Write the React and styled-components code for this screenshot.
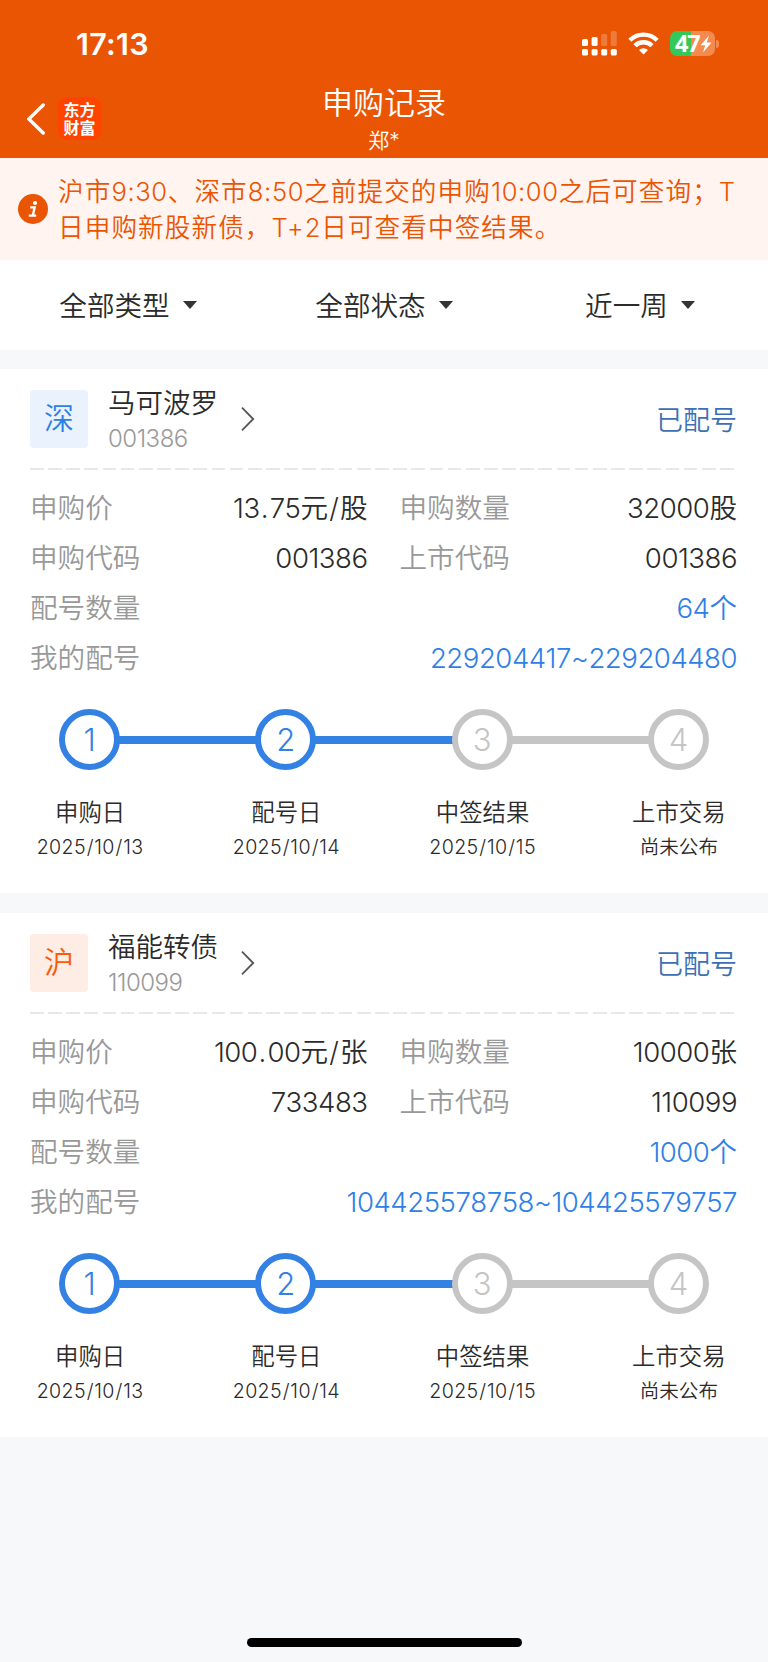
import { Fragment } from "react";
import styled, { createGlobalStyle } from "styled-components";

const GlobalStyle = createGlobalStyle`
    * {
        box-sizing: border-box;
    }

    body {
        margin: 0;
        background: #f6f8fa;
        font-family: Inter, "Noto Sans CJK SC", sans-serif;
        font-weight: 350;
        color: #2b2b2b;
    }
`;

const filters = ["全部类型", "全部状态", "近一周"];

const records = [
    {
        market: "深",
        name: "马可波罗",
        code: "001386",
        status: "已配号",
        price: "13.75元/股",
        amount: "32000股",
        applyCode: "001386",
        listCode: "001386",
        count: "64个",
        numbers: "229204417~229204480"
    },
    {
        market: "沪",
        name: "福能转债",
        code: "110099",
        status: "已配号",
        price: "100.00元/张",
        amount: "10000张",
        applyCode: "733483",
        listCode: "110099",
        count: "1000个",
        numbers: "104425578758~104425579757"
    }
];

const steps = [
    { title: "申购日", date: "2025/10/13", done: true },
    { title: "配号日", date: "2025/10/14", done: true },
    { title: "中签结果", date: "2025/10/15", done: false },
    { title: "上市交易", date: "尚未公布", done: false }
];

// digits and separators are spaced differently from the chinese text
function Mixed({ text, spacing = -0.5 }) {
    return text.split(/([0-9:~]+|[./])/).filter(Boolean).map((part, i) => {
        if (/[./]/.test(part)) return <Separator key={i}>{part}</Separator>;
        if (/[0-9:~]/.test(part)) return <Digits key={i} $spacing={spacing}>{part}</Digits>;
        return <Fragment key={i}>{part}</Fragment>;
    });
}

function StatusIcons() {
    return (
        <Icons>
            <svg width="36" height="25" viewBox="0 0 36 25" fill="#fff">
                <rect x="0" y="8" width="6" height="7" rx="1.6" />
                <rect x="9.6" y="6" width="6" height="9" rx="1.6" />
                <rect x="19.2" y="3" width="6" height="12" rx="1.6" opacity="0.22" />
                <rect x="28.8" y="0" width="6" height="15" rx="1.6" opacity="0.22" />
                <rect x="0" y="18" width="6" height="6.6" rx="1.6" />
                <rect x="9.6" y="18" width="6" height="6.6" rx="1.6" />
                <rect x="19.2" y="18" width="6" height="6.6" rx="1.6" />
                <rect x="28.8" y="18" width="6" height="6.6" rx="1.6" />
            </svg>
            <svg width="31" height="25" viewBox="0 0 31 25" fill="none" stroke="#fff" strokeWidth="4.4">
                <path d="M1.9 9.2 A19.4 19.4 0 0 1 29.1 9.2" />
                <path d="M7 14.8 A12 12 0 0 1 24 14.8" />
                <path d="M15.5 23.6 L11 19 A6.4 6.4 0 0 1 20 19 Z" fill="#fff" stroke="none" />
            </svg>
            <Battery>
                <Level>47</Level>
                <svg width="12" height="18" viewBox="0 0 12 18">
                    <path d="M9 0.5 L0.5 10.2 H5.2 L3 17.5 L11.5 7.4 H6.8 Z" fill="#fff" />
                </svg>
            </Battery>
            <BatteryCap />
        </Icons>
    );
}

function Record({ record }) {
    return (
        <Card>
            <CardHead>
                <Market $market={record.market}>{record.market}</Market>
                <Stock>
                    <StockName>{record.name}</StockName>
                    <StockCode>{record.code}</StockCode>
                </Stock>
                <svg width="14" height="25" viewBox="0 0 14 25" fill="none" stroke="#555" strokeWidth="1.8">
                    <path d="M1 0.7 L12.2 12 L1 23.3" />
                </svg>
                <Status>{record.status}</Status>
            </CardHead>
            <Dashes />
            <Details>
                <Cell><Label>申购价</Label><Value><Mixed text={record.price} /></Value></Cell>
                <Cell><Label>申购数量</Label><Value><Mixed text={record.amount} /></Value></Cell>
                <Cell><Label>申购代码</Label><Value><Mixed text={record.applyCode} /></Value></Cell>
                <Cell><Label>上市代码</Label><Value><Mixed text={record.listCode} /></Value></Cell>
                <Cell $wide><Label>配号数量</Label><Value $blue><Mixed text={record.count} /></Value></Cell>
                <Cell $wide><Label>我的配号</Label><Value $blue><Mixed text={record.numbers} /></Value></Cell>
            </Details>
            <Track>
                {steps.map((step, i) => (
                    <Fragment key={step.title}>
                        {i > 0 && <Line $done={steps[i - 1].done} />}
                        <Circle $done={step.done}>{i + 1}</Circle>
                    </Fragment>
                ))}
            </Track>
            <StepLabels>
                {steps.map((step) => (
                    <div key={step.title}>
                        <StepTitle>{step.title}</StepTitle>
                        <StepDate><Mixed text={step.date} spacing={0.35} /></StepDate>
                    </div>
                ))}
            </StepLabels>
        </Card>
    );
}

function App() {
    return (
        <Page>
            <GlobalStyle />
            <Header>
                <StatusBar>
                    <Time>17:13</Time>
                    <StatusIcons />
                </StatusBar>
                <NavBar>
                    <NavLeft>
                        <svg width="19" height="32" viewBox="0 0 19 32" fill="none" stroke="#fff" strokeWidth="3.4" strokeLinecap="round">
                            <path d="M16.2 2 L1.8 16 L16.2 30" />
                        </svg>
                        <Logo><span>东方</span><span>财富</span></Logo>
                    </NavLeft>
                    <Titles>
                        <Title>申购记录</Title>
                        <User>郑*</User>
                    </Titles>
                </NavBar>
            </Header>
            <Notice>
                <svg width="30" height="30" viewBox="0 0 30 30">
                    <circle cx="15" cy="15" r="15" fill="#ea5504" />
                    <circle cx="17" cy="9" r="2.1" fill="#fff" />
                    <path d="M12.2 13.4 H16.6 L14.8 21.4 M10.8 21.6 H18.2" fill="none" stroke="#fff" strokeWidth="2.4" />
                </svg>
                <NoticeText>
                    <div><Mixed text="沪市9:30、深市8:50之前提交的申购10:00之后可查询；T" spacing={0.6} /></div>
                    <div><Mixed text="日申购新股新债，T+2日可查看中签结果。" spacing={0.6} /></div>
                </NoticeText>
            </Notice>
            <Filters>
                {filters.map((name) => (
                    <Filter key={name}><span>{name}</span><Caret /></Filter>
                ))}
            </Filters>
            {records.map((record) => <Record key={record.name} record={record} />)}
            <HomeBar />
        </Page>
    );
}

const Page = styled.div`
    display: flex;
    flex-direction: column;
    width: 768px;
    height: 1662px;
    overflow: hidden;
    background: #f6f8fa;
`;

const Header = styled.header`
    height: 158px;
    background: #ea5504;
    color: #fff;
`;

const StatusBar = styled.div`
    display: flex;
    justify-content: space-between;
    align-items: center;
    height: 87px;
    padding: 0 49px 0 76px;
`;

const Time = styled.span`
    font-size: 30.5px;
    font-weight: 600;
    letter-spacing: 0.3px;
`;

const Icons = styled.div`
    display: flex;
    align-items: center;

    > svg + svg {
        margin-left: 10px;
    }
`;

const Battery = styled.div`
    display: flex;
    align-items: center;
    width: 45px;
    height: 25px;
    margin-left: 11px;
    padding-left: 5px;
    border-radius: 7px;
    background: linear-gradient(to right, #34c759 21px, #f38a50 21px);
`;

const Level = styled.span`
    font-family: "Open Sans", sans-serif;
    font-size: 23.5px;
    font-weight: 700;
    letter-spacing: -1.1px;
    line-height: 25px;
`;

const BatteryCap = styled.div`
    width: 3px;
    height: 8px;
    margin-left: 1px;
    border-radius: 0 3px 3px 0;
    background: #f38a50;
`;

const NavBar = styled.div`
    display: grid;
    grid-template-columns: 1fr auto 1fr;
    height: 71px;
`;

const NavLeft = styled.div`
    display: flex;
    align-items: flex-start;
    gap: 12px;
    padding: 10px 0 0 27px;

    > svg {
        margin-top: 6px;
    }
`;

const Logo = styled.div`
    display: flex;
    flex-direction: column;
    align-items: center;
    justify-content: center;
    width: 43px;
    height: 43px;
    border-radius: 9px;
    background: #ff4400;
    font-size: 16px;
    font-weight: 700;
    line-height: 18px;
`;

const Titles = styled.div`
    text-align: center;
`;

const Title = styled.div`
    font-size: 31px;
    line-height: 32px;
`;

const User = styled.div`
    margin-top: 8px;
    font-size: 21px;
    line-height: 28px;
`;

const Notice = styled.div`
    display: flex;
    align-items: center;
    gap: 10px;
    height: 102px;
    padding-left: 18px;
    background: #fff4ef;
    color: #ea5504;
`;

const NoticeText = styled.div`
    padding-top: 2px;
    font-size: 25.6px;
    letter-spacing: 1.1px;
    line-height: 36px;
    white-space: nowrap;
`;

const Filters = styled.div`
    display: grid;
    grid-template-columns: repeat(3, 1fr);
    height: 90px;
    background: #fff;
`;

const Filter = styled.div`
    display: flex;
    align-items: center;
    justify-content: center;
    gap: 13px;
    font-size: 27.6px;

    span {
        padding-bottom: 2px;
    }
`;

const Caret = styled.i`
    border: 7px solid transparent;
    border-top: 8px solid #333;
    border-bottom: 0;
`;

const Card = styled.section`
    flex: none;
    height: 524px;
    margin-top: 19px;
    padding: 21px 31px 0 30px;
    background: #fff;

    & + & {
        margin-top: 20px;
    }
`;

const CardHead = styled.div`
    display: flex;
    align-items: center;
    height: 58px;
`;

const Market = styled.div`
    width: 58px;
    height: 58px;
    border-radius: 4px;
    background: ${({ $market }) => ($market === "深" ? "#e9f2fd" : "#fdede4")};
    color: ${({ $market }) => ($market === "深" ? "#2f80e6" : "#fa5a0a")};
    font-size: 30px;
    line-height: 56px;
    text-align: center;
`;

const Stock = styled.div`
    width: 153px;
    padding: 4px 0 0 20px;
`;

const StockName = styled.div`
    font-size: 27.5px;
    line-height: 36px;
`;

const StockCode = styled.div`
    color: #999;
    font-size: 24px;
    letter-spacing: -0.5px;
    line-height: 36px;
`;

const Status = styled.span`
    margin-left: auto;
    padding-bottom: 2px;
    color: #3c70b6;
    font-size: 27px;
`;

const Dashes = styled.div`
    height: 2px;
    margin-top: 20px;
    background: repeating-linear-gradient(to right, #e8e8e8 0 13.7px, transparent 13.7px 18.16px);
`;

const Details = styled.div`
    display: grid;
    grid-template-columns: 1fr 1fr;
    column-gap: 32px;
    grid-auto-rows: 50px;
    padding-top: 13px;
`;

const Cell = styled.div`
    display: flex;
    justify-content: space-between;
    grid-column: ${({ $wide }) => ($wide ? "span 2" : "auto")};
    font-size: 27.6px;
    line-height: 50px;
    white-space: nowrap;
`;

const Label = styled.span`
    color: #999;
`;

const Value = styled.span`
    color: ${({ $blue }) => ($blue ? "#2f80e6" : "#2b2b2b")};
`;

const Digits = styled.span`
    font-kerning: none;
    letter-spacing: ${({ $spacing }) => $spacing}px;
`;

const Separator = styled.span`
    padding: 0 0.04em;
`;

const Track = styled.div`
    display: flex;
    align-items: center;
    margin-top: 26px;
    padding: 0 28px 0 29px;
`;

const Circle = styled.div`
    width: 61px;
    height: 61px;
    border: 6px solid ${({ $done }) => ($done ? "#3381e3" : "#c5c5c5")};
    border-radius: 50%;
    color: ${({ $done }) => ($done ? "#3381e3" : "#c5c5c5")};
    font-size: 31px;
    font-weight: 300;
    line-height: 49px;
    text-align: center;
`;

const Line = styled.div`
    flex: 1;
    height: 8px;
    margin: 0 -1px;
    background: ${({ $done }) => ($done ? "#3381e3" : "#c5c5c5")};
`;

const StepLabels = styled.div`
    display: grid;
    grid-template-columns: repeat(4, 1fr);
    margin: 25px -40px 0 -38px;
    text-align: center;
`;

const StepTitle = styled.div`
    font-size: 23.4px;
    line-height: 35px;
`;

const StepDate = styled.div`
    font-size: 19.6px;
    line-height: 35px;
`;

const HomeBar = styled.div`
    width: 275px;
    height: 9px;
    margin: auto auto 15px;
    border-radius: 5px;
    background: #000;
`;

export default App;
